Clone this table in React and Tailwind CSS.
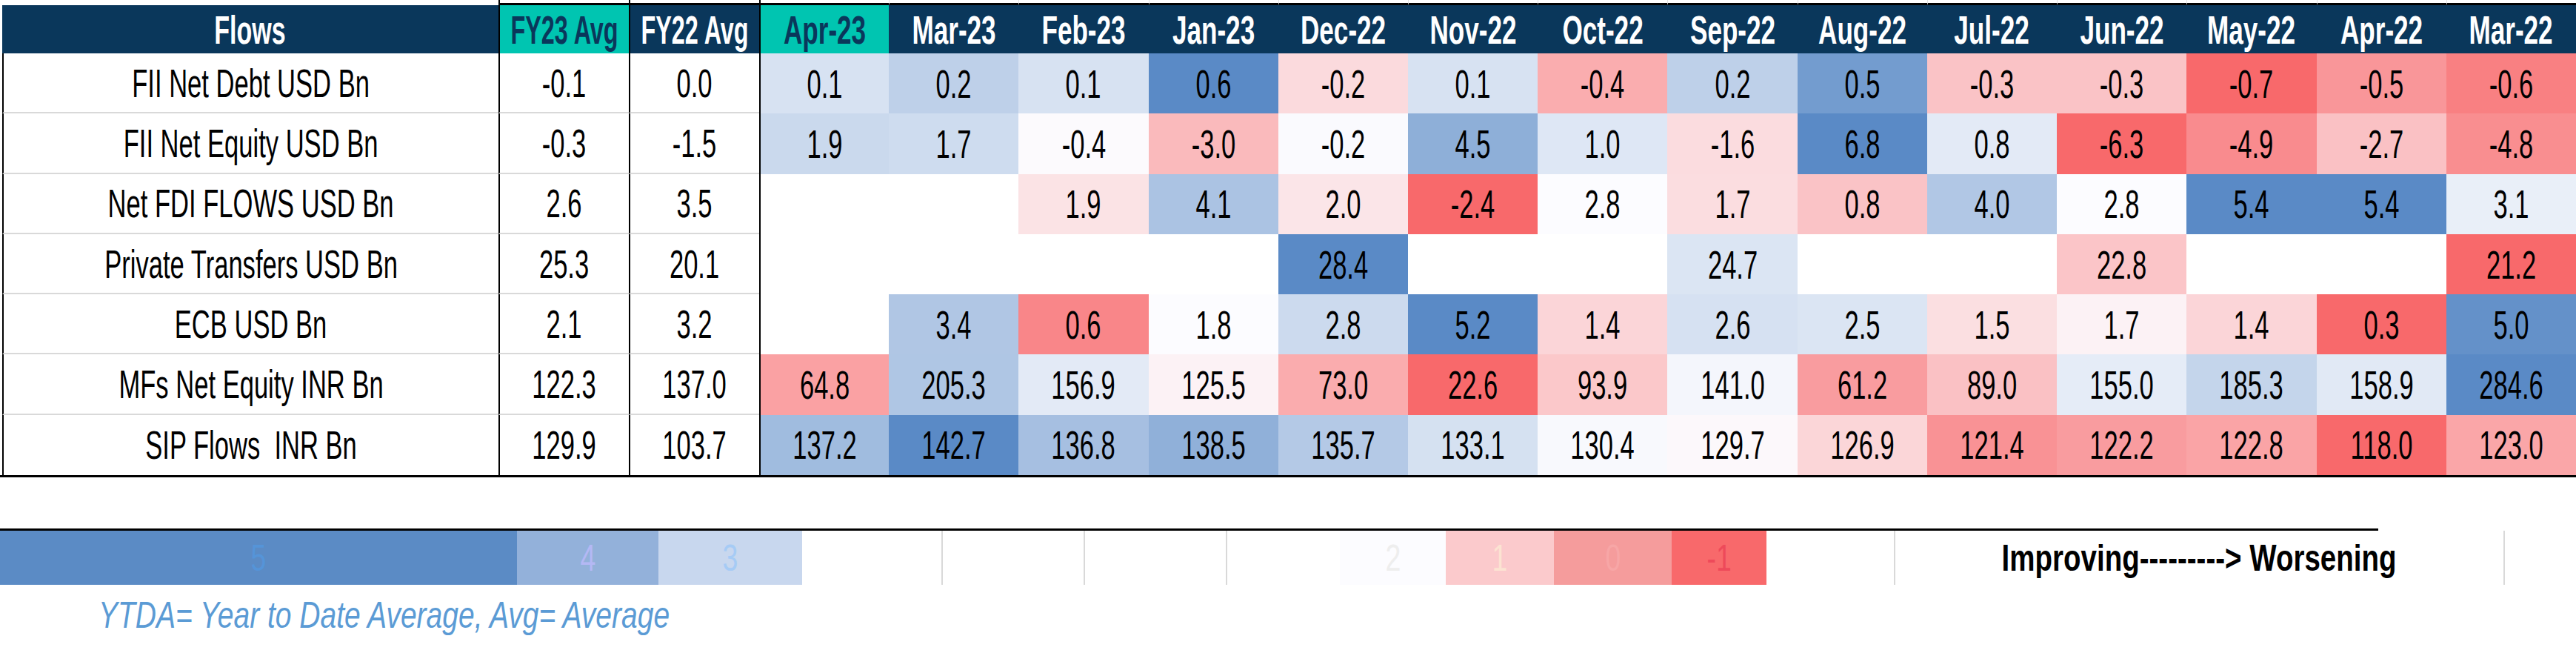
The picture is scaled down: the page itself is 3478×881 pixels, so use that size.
import React from "react";

const months = ["Apr-23", "Mar-23", "Feb-23", "Jan-23", "Dec-22", "Nov-22", "Oct-22", "Sep-22", "Aug-22", "Jul-22", "Jun-22", "May-22", "Apr-22", "Mar-22"];

const rows = [
  { name: "FII Net Debt USD Bn", fy23: -0.1, fy22: 0.0, vals: [0.1, 0.2, 0.1, 0.6, -0.2, 0.1, -0.4, 0.2, 0.5, -0.3, -0.3, -0.7, -0.5, -0.6] },
  { name: "FII Net Equity USD Bn", fy23: -0.3, fy22: -1.5, vals: [1.9, 1.7, -0.4, -3.0, -0.2, 4.5, 1.0, -1.6, 6.8, 0.8, -6.3, -4.9, -2.7, -4.8] },
  { name: "Net FDI FLOWS USD Bn", fy23: 2.6, fy22: 3.5, vals: [null, null, 1.9, 4.1, 2.0, -2.4, 2.8, 1.7, 0.8, 4.0, 2.8, 5.4, 5.4, 3.1] },
  { name: "Private Transfers USD Bn", fy23: 25.3, fy22: 20.1, vals: [null, null, null, null, 28.4, null, null, 24.7, null, null, 22.8, null, null, 21.2] },
  { name: "ECB USD Bn", fy23: 2.1, fy22: 3.2, vals: [null, 3.4, 0.6, 1.8, 2.8, 5.2, 1.4, 2.6, 2.5, 1.5, 1.7, 1.4, 0.3, 5.0] },
  { name: "MFs Net Equity INR Bn", fy23: 122.3, fy22: 137.0, vals: [64.8, 205.3, 156.9, 125.5, 73.0, 22.6, 93.9, 141.0, 61.2, 89.0, 155.0, 185.3, 158.9, 284.6] },
  { name: "SIP Flows  INR Bn", fy23: 129.9, fy22: 103.7, vals: [137.2, 142.7, 136.8, 138.5, 135.7, 133.1, 130.4, 129.7, 126.9, 121.4, 122.2, 122.8, 118.0, 123.0] },
];

// excel style 3 colour scale: red (min) -> white (50th pct) -> blue (max)
const WHITE = [252, 252, 255];
const BLUE = [90, 138, 198];
const RED = [248, 105, 107];

const mix = (a, b, t) => `rgb(${a.map((v, i) => Math.round(v + (b[i] - v) * t)).join(",")})`;

const median = (arr) => {
  const s = [...arr].sort((a, b) => a - b);
  const n = s.length;
  return n % 2 ? s[(n - 1) / 2] : (s[n / 2 - 1] + s[n / 2]) / 2;
};

const rowColors = (vals) => {
  const nums = vals.filter((v) => v !== null);
  const min = Math.min(...nums);
  const max = Math.max(...nums);
  const mid = median(nums);
  return vals.map((v) => {
    if (v === null) return "#ffffff";
    if (v >= mid) return mix(WHITE, BLUE, max === mid ? 0 : (v - mid) / (max - mid));
    return mix(WHITE, RED, (mid - v) / (mid - min));
  });
};

const Txt = ({ children, className = "" }) => (
  <span className={`inline-block whitespace-pre leading-none ${className}`}>{children}</span>
);

const legend = [
  { w: "w-[698px]", bg: "bg-[#5B8BC5]", txt: "5", color: "text-[#5594D8]" },
  { w: "w-[191px]", bg: "bg-[#93B1DA]", txt: "4", color: "text-[#B4B8F4]" },
  { w: "w-[194px]", bg: "bg-[#C8D7EE]", txt: "3", color: "text-[#A6CBF5]" },
  { w: "w-[190px]", bg: "bg-white border-r-2 border-[#d9d9d9]" },
  { w: "w-[192px]", bg: "bg-white border-r-2 border-[#d9d9d9]" },
  { w: "w-[192px]", bg: "bg-white border-r-2 border-[#d9d9d9]" },
  { w: "w-[152px]", bg: "bg-white" },
  { w: "w-[143px]", bg: "bg-[#FCFCFF]", txt: "2", color: "text-[#eeeeee]" },
  { w: "w-[146px]", bg: "bg-[#FBCACC]", txt: "1", color: "text-[#FCE3D2]" },
  { w: "w-[159px]", bg: "bg-[#F59C9C]", txt: "0", color: "text-[#F7A6A6]" },
  { w: "w-[128px]", bg: "bg-[#F8696B]", txt: "-1", color: "text-[#EE4A5A]" },
  { w: "w-[174px]", bg: "bg-white border-r-2 border-[#d9d9d9]" },
];

export default function App() {
  return (
    <div className="w-[3478px] h-[881px] overflow-hidden bg-white text-black font-['Liberation_Sans',Arial,sans-serif]">
      {/* table */}
      <div className="pl-[3px]">
        <div className="grid grid-cols-[670px_176px_176px_repeat(14,minmax(0,1fr))] grid-rows-[7px_65px_repeat(7,81.3px)]">
          {/* top strip */}
          <div className="bg-white" />
          <div className="border-l-2 border-l-black border-b-[3px] border-b-black" />
          <div className="border-l-2 border-l-black border-b-[3px] border-b-black" />
          {months.map((m, i) => (
            <div key={m} className={i === 0 ? "border-l-2 border-l-black border-b-[3px] border-b-black" : "border-l border-l-[#e3e3e3] border-b-[3px] border-b-black"} />
          ))}

          {/* header */}
          <div className="bg-[#0A375B] flex items-center justify-center">
            <Txt className="text-[54px] font-bold text-white scale-x-[0.63]">Flows</Txt>
          </div>
          <div className="bg-[#00C5B1] border-l-2 border-l-black flex items-center justify-center">
            <Txt className="text-[54px] font-bold text-[#0A375B] scale-x-[0.6]">FY23 Avg</Txt>
          </div>
          <div className="bg-[#0A375B] border-l-2 border-l-black flex items-center justify-center">
            <Txt className="text-[54px] font-bold text-white scale-x-[0.6]">FY22 Avg</Txt>
          </div>
          {months.map((m, i) => (
            <div
              key={m}
              className={
                i === 0
                  ? "bg-[#00C5B1] border-l-2 border-l-black flex items-center justify-center"
                  : "bg-[#0A375B] flex items-center justify-center"
              }
            >
              <Txt className={i === 0 ? "text-[54px] font-bold text-[#0A375B] scale-x-[0.65]" : "text-[54px] font-bold text-white scale-x-[0.65]"}>
                {m}
              </Txt>
            </div>
          ))}

          {/* body */}
          {rows.map((r, ri) => {
            const colors = rowColors(r.vals);
            const sep = ri < rows.length - 1 ? "border-b-2 border-b-[#d9d9d9]" : "";
            return (
              <React.Fragment key={r.name}>
                <div className={`border-l-2 border-l-black flex items-center justify-center ${sep}`}>
                  <Txt className="text-[54px] scale-x-[0.64]">{r.name}</Txt>
                </div>
                <div className={`border-l-2 border-l-black flex items-center justify-center ${sep}`}>
                  <Txt className="text-[54px] scale-x-[0.64]">{r.fy23.toFixed(1)}</Txt>
                </div>
                <div className={`border-l-2 border-l-black flex items-center justify-center ${sep}`}>
                  <Txt className="text-[54px] scale-x-[0.64]">{r.fy22.toFixed(1)}</Txt>
                </div>
                {r.vals.map((v, i) => (
                  <div
                    key={i}
                    className={i === 0 ? "border-l-2 border-l-black flex items-center justify-center" : "flex items-center justify-center"}
                    style={{ backgroundColor: colors[i] }}
                  >
                    {v !== null && <Txt className="text-[54px] scale-x-[0.64]">{v.toFixed(1)}</Txt>}
                  </div>
                ))}
              </React.Fragment>
            );
          })}
        </div>
      </div>
      <div className="h-[3px] bg-black" />

      {/* legend */}
      <div className="h-[69px]" />
      <div className="w-[3211px] h-[3px] bg-black" />
      <div className="flex h-[73px]">
        {legend.map((l, i) => (
          <div key={i} className={`${l.w} ${l.bg} shrink-0 flex items-center justify-center`}>
            {l.txt && <Txt className={`text-[50px] scale-x-[0.75] ${l.color}`}>{l.txt}</Txt>}
          </div>
        ))}
        <div className="w-[823px] shrink-0 border-r-2 border-[#d9d9d9] flex items-center justify-center">
          <Txt className="text-[50px] font-bold scale-x-[0.77]">Improving---------&gt; Worsening</Txt>
        </div>
      </div>

      {/* footnote */}
      <div className="pl-[133px] pt-[16px]">
        <Txt className="text-[50px] italic text-[#5B9BD5] origin-left scale-x-[0.78]">YTDA= Year to Date Average, Avg= Average</Txt>
      </div>
    </div>
  );
}
